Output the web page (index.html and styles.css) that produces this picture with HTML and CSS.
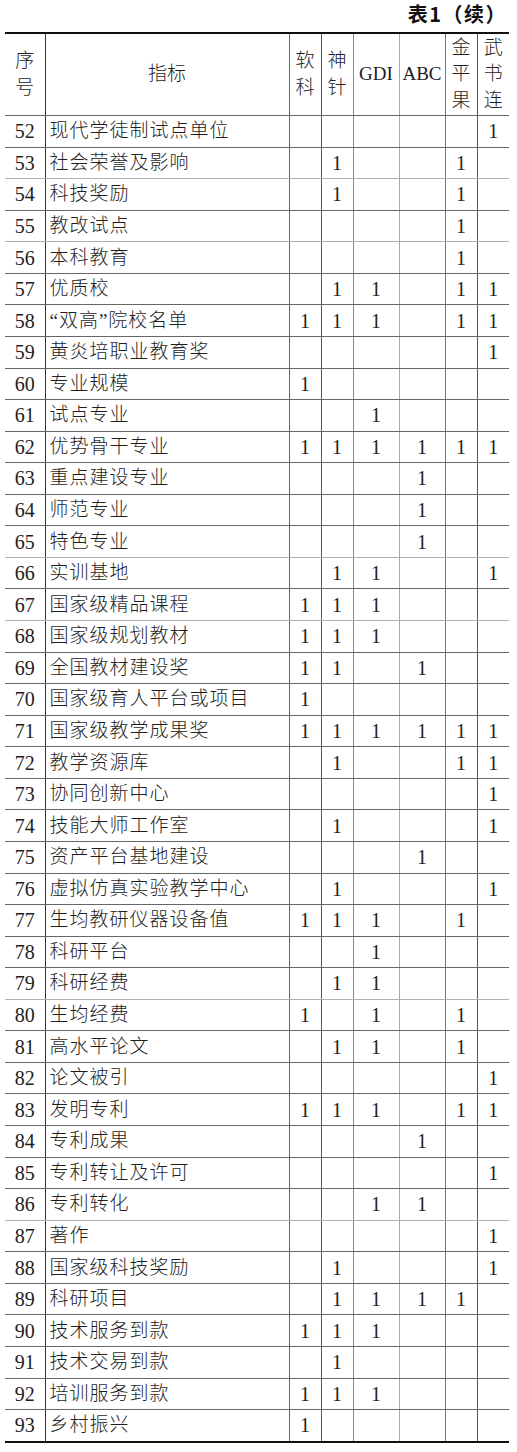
FILE: index.html
```html
<!DOCTYPE html>
<html lang="zh-CN">
<head>
<meta charset="utf-8">
<title>表1（续）</title>
<link rel="stylesheet" href="styles.css">
</head>
<body>
<div class="page">
  <div class="caption">表1（续）</div>
  <table class="tbl">
    <colgroup>
      <col class="c-no"><col class="c-name"><col class="c-n"><col class="c-n"><col class="c-w"><col class="c-w"><col class="c-n"><col class="c-n">
    </colgroup>
    <thead>
      <tr>
        <th class="b1">序<br>号</th>
        <th class="b2">指标</th>
        <th class="b3">软<br>科</th>
        <th class="b4">神<br>针</th>
        <th class="b5 lat">GDI</th>
        <th class="b6 lat">ABC</th>
        <th class="b7">金<br>平<br>果</th>
        <th class="b8">武<br>书<br>连</th>
      </tr>
    </thead>
    <tbody id="rows"></tbody>
  </table>
</div>
<script src="app.js"></script>
</body>
</html>
```

FILE: app.js
```js
const data = [
  [52,"现代学徒制试点单位","","","","","","1"],
  [53,"社会荣誉及影响","","1","","","1",""],
  [54,"科技奖励","","1","","","1",""],
  [55,"教改试点","","","","","1",""],
  [56,"本科教育","","","","","1",""],
  [57,"优质校","","1","1","","1","1"],
  [58,"“双高”院校名单","1","1","1","","1","1"],
  [59,"黄炎培职业教育奖","","","","","","1"],
  [60,"专业规模","1","","","","",""],
  [61,"试点专业","","","1","","",""],
  [62,"优势骨干专业","1","1","1","1","1","1"],
  [63,"重点建设专业","","","","1","",""],
  [64,"师范专业","","","","1","",""],
  [65,"特色专业","","","","1","",""],
  [66,"实训基地","","1","1","","","1"],
  [67,"国家级精品课程","1","1","1","","",""],
  [68,"国家级规划教材","1","1","1","","",""],
  [69,"全国教材建设奖","1","1","","1","",""],
  [70,"国家级育人平台或项目","1","","","","",""],
  [71,"国家级教学成果奖","1","1","1","1","1","1"],
  [72,"教学资源库","","1","","","1","1"],
  [73,"协同创新中心","","","","","","1"],
  [74,"技能大师工作室","","1","","","","1"],
  [75,"资产平台基地建设","","","","1","",""],
  [76,"虚拟仿真实验教学中心","","1","","","","1"],
  [77,"生均教研仪器设备值","1","1","1","","1",""],
  [78,"科研平台","","","1","","",""],
  [79,"科研经费","","1","1","","",""],
  [80,"生均经费","1","","1","","1",""],
  [81,"高水平论文","","1","1","","1",""],
  [82,"论文被引","","","","","","1"],
  [83,"发明专利","1","1","1","","1","1"],
  [84,"专利成果","","","","1","",""],
  [85,"专利转让及许可","","","","","","1"],
  [86,"专利转化","","","1","1","",""],
  [87,"著作","","","","","","1"],
  [88,"国家级科技奖励","","1","","","","1"],
  [89,"科研项目","","1","1","1","1",""],
  [90,"技术服务到款","1","1","1","","",""],
  [91,"技术交易到款","","1","","","",""],
  [92,"培训服务到款","1","1","1","","",""],
  [93,"乡村振兴","1","","","","",""]
];
const light = new Set([53,55,65,67,79,86]);
const tbody = document.getElementById("rows");
data.forEach(r => {
  const tr = document.createElement("tr");
  if (light.has(r[0])) tr.className = "light";
  r.forEach((v, i) => {
    const td = document.createElement("td");
    td.textContent = v;
    td.className = "b" + (i + 1) + (i === 1 ? " name" : "");
    tr.appendChild(td);
  });
  tbody.appendChild(tr);
});
```

FILE: styles.css
```css
html, body {
  margin: 0;
  padding: 0;
  background: #fff;
}
.page {
  padding: 0 9px 0 5px;
  width: 503px;
  color: #1e1e1e;
  font-family: "Liberation Serif", "Noto Sans CJK SC", serif;
}
.caption {
  height: 32px;
  box-sizing: border-box;
  padding-top: 1px;
  padding-right: 1px;
  text-align: right;
  font-family: "Noto Sans CJK SC", sans-serif;
  font-weight: 700;
  font-size: 20px;
  letter-spacing: 1.5px;
  line-height: 26px;
  color: #111;
}
.tbl {
  width: 503px;
  table-layout: fixed;
  border-collapse: collapse;
  border-top: 2px solid #111;
  border-bottom: 2px solid #111;
}
.c-no { width: 40px; }
.c-name { width: 244px; }
.c-n { width: 32px; }
.c-w { width: 46px; }
.tbl th, .tbl td {
  padding: 0;
  text-align: center;
  vertical-align: middle;
  font-weight: 300;
  font-size: 19px;
  border-left: 1px solid #777;
  border-bottom: 1px solid #666;
}
.tbl th {
  height: 81px;
  line-height: 26.5px;
}
.tbl td {
  height: 30.57px;
  line-height: 24px;
  font-size: 20px;
}
.tbl .b1 { border-left: none; }
.tbl .b2 { border-left-color: #333; }
.tbl .b3 { border-left-color: #666; }
.tbl .b4 { border-left-color: #555; }
.tbl .b5 { border-left-color: #888; }
.tbl .b6 { border-left-color: #aaa; }
.tbl .b7 { border-left-color: #777; }
.tbl .b8 { border-left-color: #555; }
.tbl td.name {
  text-align: left;
  padding-left: 4px;
  font-size: 19px;
  letter-spacing: 1px;
  white-space: nowrap;
}
.tbl th.lat {
  font-family: "Liberation Serif", serif;
  font-size: 19px;
  font-weight: 400;
}
.tbl tr.light td { border-bottom-color: #b0b0b0; }
.tbl tbody tr:last-child td { border-bottom: none; }
```
